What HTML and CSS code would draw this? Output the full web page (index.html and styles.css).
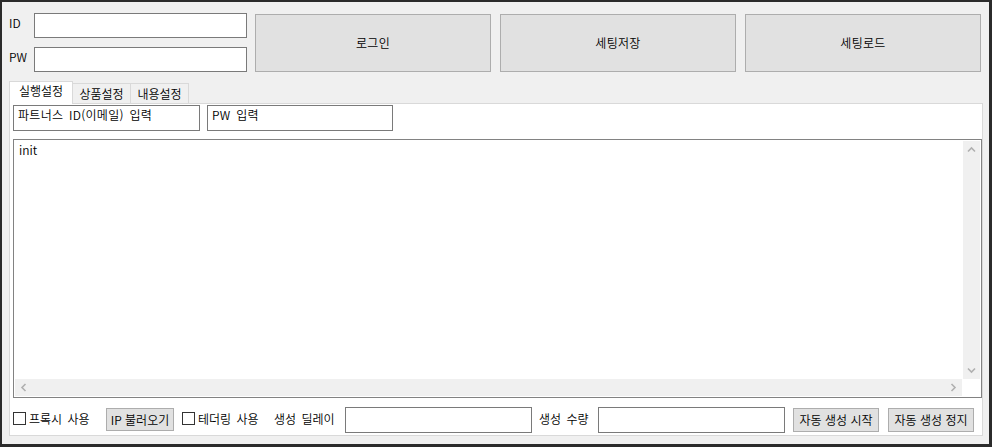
FILE: index.html
```html
<!DOCTYPE html>
<html lang="ko">
<head>
    <meta charset="UTF-8">
    <meta name="viewport" content="width=device-width, initial-scale=1.0">
    <title>자동 생성</title>
    <link rel="stylesheet" href="styles.css">
</head>
<body>
    <div class="window">
        <div class="top-row">
            <div class="login-fields">
                <div class="field">
                    <label class="field-label">ID</label>
                    <div class="text-box login-box"></div>
                </div>
                <div class="field">
                    <label class="field-label">PW</label>
                    <div class="text-box login-box"></div>
                </div>
            </div>
            <button class="big-btn">로그인</button>
            <button class="big-btn">세팅저장</button>
            <button class="big-btn">세팅로드</button>
        </div>

        <div class="tabs">
            <div class="tab-strip">
                <span class="tab active">실행설정</span>
                <span class="tab">상품설정</span>
                <span class="tab">내용설정</span>
            </div>
            <div class="tab-page">
                <div class="account-row">
                    <div class="text-box multi">파트너스 ID(이메일) 입력</div>
                    <div class="text-box multi">PW 입력</div>
                </div>

                <div class="log-box">
                    <div class="log-text">init</div>
                    <div class="v-scroll">
                        <svg width="17" height="17" viewBox="0 0 17 17"><polyline points="5,10.5 8.5,7 12,10.5" fill="none" stroke="#b0b0b0" stroke-width="1.6"/></svg>
                        <svg width="17" height="17" viewBox="0 0 17 17"><polyline points="5,6.5 8.5,10 12,6.5" fill="none" stroke="#b0b0b0" stroke-width="1.6"/></svg>
                    </div>
                    <div class="h-scroll">
                        <svg width="17" height="17" viewBox="0 0 17 17"><polyline points="10.5,5 7,8.5 10.5,12" fill="none" stroke="#b0b0b0" stroke-width="1.6"/></svg>
                        <svg width="17" height="17" viewBox="0 0 17 17"><polyline points="6.5,5 10,8.5 6.5,12" fill="none" stroke="#b0b0b0" stroke-width="1.6"/></svg>
                    </div>
                    <div class="scroll-corner"></div>
                </div>

                <div class="control-row">
                    <span class="check-box"></span>
                    <span class="check-label proxy-label">프록시 사용</span>
                    <button class="small-btn ip-btn">IP 불러오기</button>
                    <span class="check-box second"></span>
                    <span class="check-label tether-label">테더링 사용</span>
                    <span class="row-label delay-label">생성 딜레이</span>
                    <div class="text-box row-input"></div>
                    <span class="row-label count-label">생성 수량</span>
                    <div class="text-box row-input"></div>
                    <button class="small-btn run-btn start-btn">자동 생성 시작</button>
                    <button class="small-btn run-btn stop-btn">자동 생성 정지</button>
                </div>
            </div>
        </div>
    </div>
</body>
</html>
```

FILE: styles.css
```css
* {
    box-sizing: border-box;
}

body {
    margin: 0;
    font-family: "Noto Sans CJK KR", "Noto Sans", sans-serif;
    font-size: 12px;
    font-weight: 350;
    line-height: 16px;
    word-spacing: 2px;
    color: #000;
    background-color: #2b2b2b;
}

.window {
    width: 992px;
    height: 447px;
    border-style: solid;
    border-color: #2b2b2b;
    border-width: 2px 3px 3px 2px;
    padding: 0 6px 0 7px;
    background-color: #f0f0f0;
}

/* 상단 로그인 영역 */
.top-row {
    display: flex;
    margin-top: 11px;
    margin-right: 2px;
}

.login-fields {
    display: flex;
    flex-direction: column;
    gap: 9px;
    width: 238px;
}

.field {
    display: flex;
    align-items: center;
    height: 25px;
}

.field-label {
    width: 25px;
    margin-top: -5px;
}

.text-box {
    background-color: #fff;
    border: 1px solid #7a7a7a;
}

.login-box {
    width: 213px;
    height: 25px;
}

.big-btn {
    width: 236px;
    height: 58px;
    margin-top: 1px;
    margin-left: 9px;
    padding: 0;
    font: inherit;
    letter-spacing: 0.3px;
    background-color: #e1e1e1;
    border: 1px solid #adadad;
    color: #000;
}

.big-btn:first-of-type {
    margin-left: 8px;
}

/* 탭 */
.tabs {
    margin-top: 9px;
}

.tab-strip {
    display: flex;
    align-items: flex-end;
    height: 22px;
    position: relative;
    z-index: 1;
}

.tab {
    height: 20px;
    width: 59px;
    margin-left: -1px;
    text-align: center;
    line-height: 18px;
    padding-top: 1px;
    background-color: #f0f0f0;
    border: 1px solid #d9d9d9;
    border-bottom: none;
}

.tab.active {
    width: 64px;
    height: 23px;
    margin-left: 0;
    margin-bottom: -1px;
    padding-top: 0;
    background-color: #fff;
    position: relative;
    z-index: 1;
}

.tab-page {
    height: 333px;
    display: flex;
    flex-direction: column;
    padding: 1px 0 2px 3px;
    background-color: #fff;
    border: 1px solid #d9d9d9;
}

.account-row {
    display: flex;
    gap: 7px;
}

.multi {
    width: 187px;
    height: 26px;
    padding: 1px 0 0 4px;
    letter-spacing: 0.3px;
}

.multi + .multi {
    width: 186px;
}

/* 로그 창 */
.log-box {
    height: 259px;
    margin-top: 8px;
    padding: 1px;
    border: 1px solid #828282;
    display: grid;
    grid-template-columns: 1fr 17px;
    grid-template-rows: 1fr 17px;
    column-gap: 1px;
}

.log-text {
    padding: 1px 0 0 4px;
}

.v-scroll {
    display: flex;
    flex-direction: column;
    justify-content: space-between;
    background-color: #f0f0f0;
}

.h-scroll {
    display: flex;
    justify-content: space-between;
    background-color: #f0f0f0;
}

.v-scroll svg, .h-scroll svg {
    display: block;
}

/* 하단 컨트롤 */
.control-row {
    display: flex;
    align-items: center;
    height: 26px;
    margin-top: 9px;
}

.check-box {
    width: 13px;
    height: 13px;
    margin-top: -3px;
    border: 1px solid #333;
    background-color: #fff;
}

.check-box.second {
    margin-left: 8px;
}

.check-label {
    margin-left: 3px;
    margin-top: -2px;
}

.proxy-label {
    width: 77px;
}

.tether-label {
    width: 76px;
}

.row-label {
    margin-top: -2px;
}

.delay-label {
    width: 71px;
}

.count-label {
    width: 59px;
    margin-left: 7px;
}

.small-btn {
    height: 23px;
    padding: 0;
    font: inherit;
    color: #000;
    background-color: #e1e1e1;
    border: 1px solid #adadad;
}

.ip-btn {
    width: 68px;
    margin-top: -1px;
}

.row-input {
    width: 187px;
    height: 26px;
}

.run-btn {
    width: 86px;
    height: 24px;
}

.start-btn {
    margin-left: 8px;
}

.stop-btn {
    margin-left: 9px;
}
```
